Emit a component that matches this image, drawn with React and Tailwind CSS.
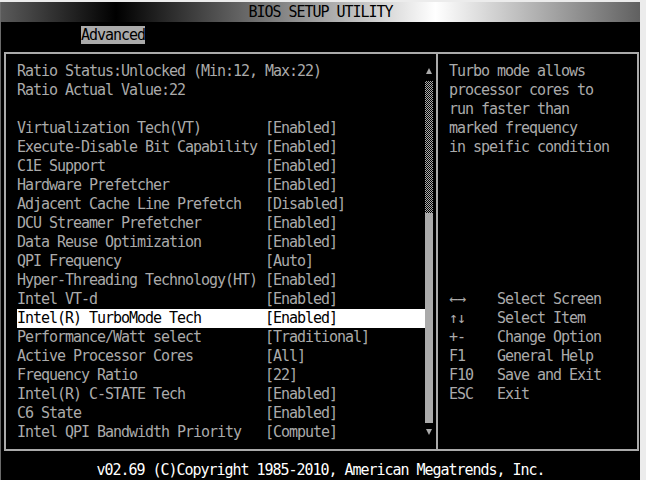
import React from "react";

const items = [
  ["Virtualization Tech(VT)", "[Enabled]"],
  ["Execute-Disable Bit Capability", "[Enabled]"],
  ["C1E Support", "[Enabled]"],
  ["Hardware Prefetcher", "[Enabled]"],
  ["Adjacent Cache Line Prefetch", "[Disabled]"],
  ["DCU Streamer Prefetcher", "[Enabled]"],
  ["Data Reuse Optimization", "[Enabled]"],
  ["QPI Frequency", "[Auto]"],
  ["Hyper-Threading Technology(HT)", "[Enabled]"],
  ["Intel VT-d", "[Enabled]"],
  ["Intel(R) TurboMode Tech", "[Enabled]", true],
  ["Performance/Watt select", "[Traditional]"],
  ["Active Processor Cores", "[All]"],
  ["Frequency Ratio", "[22]"],
  ["Intel(R) C-STATE Tech", "[Enabled]"],
  ["C6 State", "[Enabled]"],
  ["Intel QPI Bandwidth Priority", "[Compute]"],
];

const help = [
  "Turbo mode allows",
  "processor cores to",
  "run faster than",
  "marked frequency",
  "in speific condition",
];

const keys = [
  ["←→", "Select Screen"],
  ["↑↓", "Select Item"],
  ["+-", "Change Option"],
  ["F1", "General Help"],
  ["F10", "Save and Exit"],
  ["ESC", "Exit"],
];

const Arrow = ({ down }) => (
  <div className="h-[19px] w-[8px] flex items-center">
    <svg width="8" height="7" viewBox="0 0 8 7">
      <polygon
        points={down ? "1,0 7,0 4,6" : "4,0 7,6 1,6"}
        fill="#aaaaaa"
      />
    </svg>
  </div>
);

export default function App() {
  return (
    <div className="w-[646px] h-[480px] bg-[#ececec] pt-[2px] font-['DejaVu_Sans_Mono','Liberation_Mono',monospace] text-[15px] tracking-[-1.03px]">
      <div className="w-[640px] h-[478px] bg-black border-l border-[#6a6a6a] flex flex-col text-[#aaaaaa]">
        {/* title */}
        <div className="h-[20px] leading-[20px] text-center text-black bg-[linear-gradient(90deg,#5a5a5a_0%,#000_18%,#fff_68%,#606060_100%)]">
          BIOS SETUP UTILITY
        </div>

        {/* tab */}
        <div className="h-[30px] pt-[2px] pl-[80px]">
          <span className="inline-block h-[18px] leading-[18px] bg-[#aaaaaa] text-black">
            Advanced
          </span>
        </div>

        {/* main panel */}
        <div className="ml-[3px] w-[635px] h-[400px] border-2 border-[#aaaaaa] flex">
          <div className="w-[430px] pt-[8px] pl-[11px] flex">
            <div className="w-[408px] leading-[19px]">
              <div>Ratio Status:Unlocked (Min:12, Max:22)</div>
              <div>Ratio Actual Value:22</div>
              <div className="h-[19px]" />
              {items.map(([label, value, sel]) => (
                <div
                  key={label}
                  className={`flex whitespace-pre ${sel ? "bg-white text-black" : ""}`}
                >
                  <span className="w-[248px]">{label}</span>
                  <span>{value}</span>
                </div>
              ))}
            </div>
            <div className="w-[8px] flex flex-col">
              <Arrow />
              <div className="h-[132px] bg-[repeating-conic-gradient(#aaaaaa_0_25%,#000_0_50%)] bg-[length:2px_2px]" />
              <div className="h-[210px] bg-[#aaaaaa]" />
              <Arrow down />
            </div>
          </div>

          <div className="w-[2px] bg-[#aaaaaa]" />

          <div className="flex-1 pt-[8px] pl-[11px] leading-[19px] whitespace-pre">
            {help.map((l) => (
              <div key={l}>{l}</div>
            ))}
            <div className="h-[133px]" />
            {keys.map(([k, d]) => (
              <div key={k} className="flex">
                <span className="w-[48px]">{k}</span>
                <span>{d}</span>
              </div>
            ))}
          </div>
        </div>

        {/* footer */}
        <div className="pt-[10px] leading-[19px] text-center text-white whitespace-pre">
          v02.69 (C)Copyright 1985-2010, American Megatrends, Inc.
        </div>
      </div>
    </div>
  );
}
